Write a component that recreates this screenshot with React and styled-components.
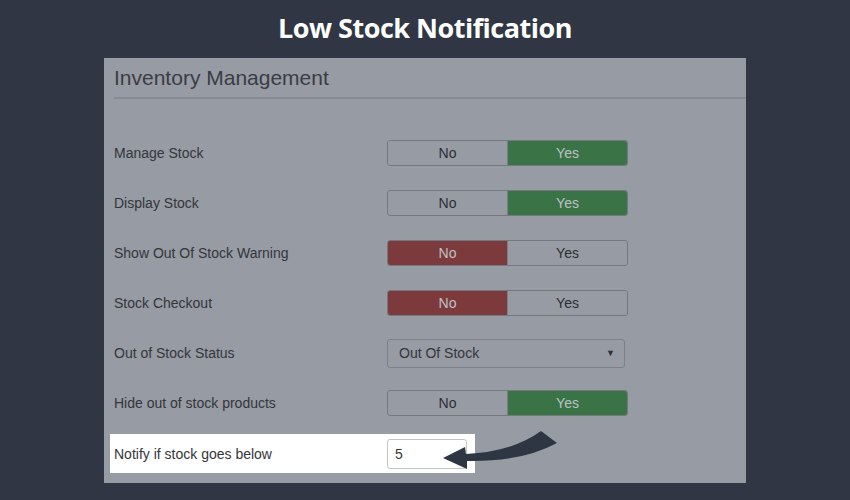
import React from "react";
import styled, { createGlobalStyle } from "styled-components";

const Global = createGlobalStyle`
  html, body { margin: 0; padding: 0; }
  body {
    background: #303643;
    width: 850px;
    height: 500px;
    overflow: hidden;
    font-family: "Liberation Sans", Arial, sans-serif;
  }
`;

const Page = styled.div`
  width: 850px;
  height: 500px;
  display: flex;
  flex-direction: column;
`;

const Title = styled.h1`
  margin: 0;
  height: 58px;
  box-sizing: border-box;
  padding-bottom: 3px;
  display: flex;
  align-items: center;
  justify-content: center;
  color: #ffffff;
  font-family: "Open Sans", sans-serif;
  font-weight: 700;
  font-size: 27px;
  letter-spacing: -0.5px;
`;

const Panel = styled.div`
  position: relative;
  margin-left: 104px;
  width: 642px;
  height: 425px;
  background: #979ba3;
  display: flex;
  flex-direction: column;
`;

const PanelHeader = styled.div`
  margin-left: 10px;
  height: 39px;
  border-bottom: 2px solid #868a92;
  display: flex;
  align-items: center;
  color: #3a3d43;
  font-size: 21px;
`;

const Rows = styled.div`
  padding-top: 29px;
  display: flex;
  flex-direction: column;
`;

const Row = styled.div`
  height: 50px;
  display: flex;
  align-items: center;
  padding-left: ${(p) => (p.$tight ? "6px" : "10px")};
`;

const Label = styled.div`
  width: 273px;
  flex: none;
  color: #33363b;
  font-size: 14px;
`;

const Highlight = styled.div`
  width: 361px;
  height: 39px;
  margin-top: 1px;
  padding-left: 4px;
  background: #ffffff;
  display: flex;
  align-items: center;
`;

const Toggle = styled.div`
  display: flex;
  width: 241px;
  height: 26px;
  box-sizing: border-box;
  border: 1px solid #73777e;
  border-radius: 3px;
  overflow: hidden;
`;

const Segment = styled.div`
  flex: 1;
  display: flex;
  align-items: center;
  justify-content: center;
  font-size: 14px;
  background: ${(p) =>
    p.$on ? (p.$tone === "yes" ? "#3a7446" : "#7c3a3c") : "#979ba3"};
  color: ${(p) => (p.$on ? "#bcc2c6" : "#2b2e33")};
  & + & {
    border-left: 1px solid #7a7e85;
  }
`;

const Select = styled.div`
  width: 238px;
  height: 29px;
  box-sizing: border-box;
  border: 1px solid #7c8087;
  border-radius: 3px;
  padding: 0 9px 0 11px;
  display: flex;
  align-items: center;
  justify-content: space-between;
  color: #33363b;
  font-size: 14px;
`;

const Caret = styled.span`
  font-size: 9px;
  color: #2e3136;
`;

const Input = styled.div`
  width: 80px;
  height: 30px;
  box-sizing: border-box;
  border: 1px solid #c4c4c4;
  border-radius: 3px;
  padding-left: 7px;
  display: flex;
  align-items: center;
  color: #3a3530;
  font-size: 14px;
  background: #fff;
`;

const ArrowSvg = styled.svg`
  position: absolute;
  left: 336px;
  top: 370px;
  width: 125px;
  height: 45px;
`;

function YesNo({ value }) {
  return (
    <Toggle>
      <Segment $on={value === "no"} $tone="no">No</Segment>
      <Segment $on={value === "yes"} $tone="yes">Yes</Segment>
    </Toggle>
  );
}

const rows = [
  ["Manage Stock", "yes"],
  ["Display Stock", "yes"],
  ["Show Out Of Stock Warning", "no"],
  ["Stock Checkout", "no"],
  ["Out of Stock Status", "select"],
  ["Hide out of stock products", "yes"],
];

export default function App() {
  return (
    <Page>
      <Global />
      <Title>Low Stock Notification</Title>
      <Panel>
        <PanelHeader>Inventory Management</PanelHeader>
        <Rows>
          {rows.map(([label, v]) => (
            <Row key={label}>
              <Label>{label}</Label>
              {v === "select" ? (
                <Select>
                  Out Of Stock
                  <Caret>▼</Caret>
                </Select>
              ) : (
                <YesNo value={v} />
              )}
            </Row>
          ))}
          <Row $tight>
            <Highlight>
              <Label>Notify if stock goes below</Label>
              <Input>5</Input>
            </Highlight>
          </Row>
        </Rows>
        <ArrowSvg viewBox="440 428 125 45">
          <path
            d="M 443 458 L 465 447 L 466 454 Q 512 452 541 431 L 557 443 Q 522 462 467 461 L 467 469 Z"
            fill="#2f3643"
          />
        </ArrowSvg>
      </Panel>
    </Page>
  );
}
